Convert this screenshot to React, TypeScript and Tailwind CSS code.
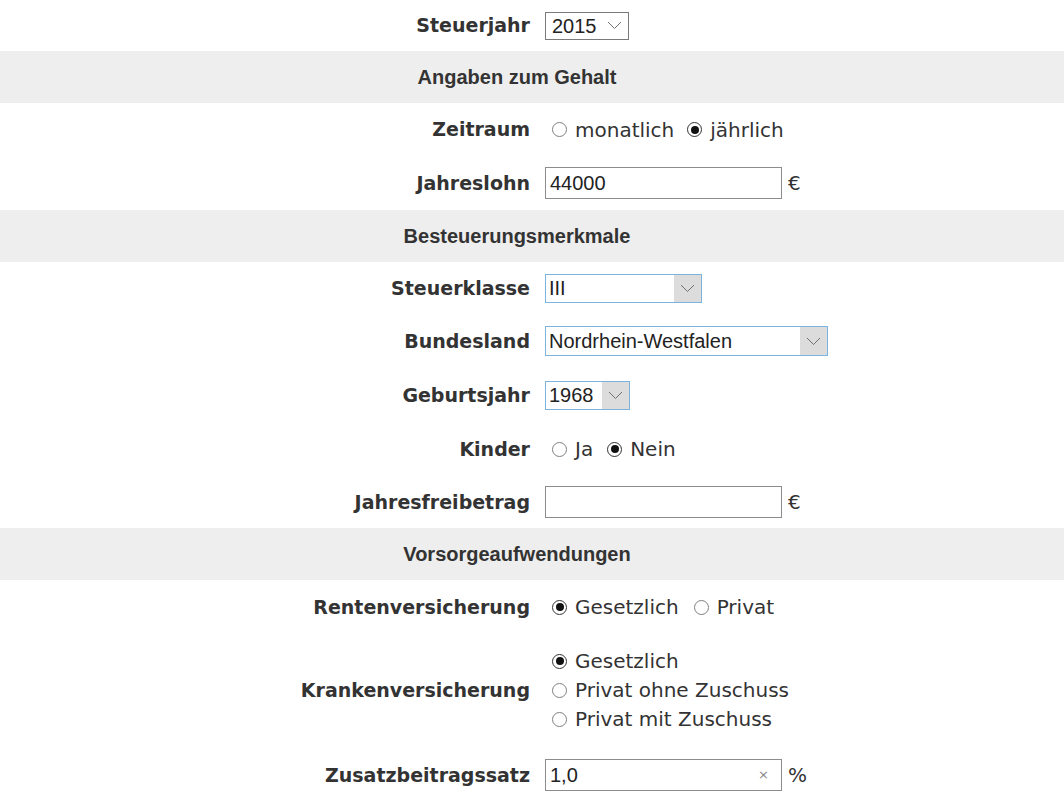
import React from 'react';

const labelCls = "text-right font-['DejaVu_Sans',sans-serif] text-[19px] font-bold text-[#333]";
const optCls = "font-['DejaVu_Sans',sans-serif] text-[20px] text-[#333]";
const fieldText = "font-['Liberation_Sans',Arial,sans-serif] text-[20px] text-[#222]";

function Chevron() {
  return (
    <svg width="15" height="9" viewBox="0 0 15 9" className="block">
      <polyline points="1,1 7.5,7.5 14,1" fill="none" stroke="#707070" strokeWidth="1" />
    </svg>
  );
}

function Radio({ checked, label }: { checked?: boolean; label: string }) {
  return (
    <label className="flex items-center">
      <span
        className={`ml-[7px] mr-[8px] flex h-[15px] w-[15px] items-center justify-center rounded-full border bg-white ${
          checked ? 'border-[#333]' : 'border-[#808080]'
        }`}
      >
        {checked && <span className="h-[8px] w-[8px] rounded-full bg-[#111]" />}
      </span>
      <span className={optCls}>{label}</span>
    </label>
  );
}

function Row({ label, h, children }: { label: string; h: string; children: React.ReactNode }) {
  return (
    <div className={`grid grid-cols-[530px_1fr] items-center gap-x-[15px] ${h}`}>
      <div className={labelCls}>{label}</div>
      <div className="flex items-center">{children}</div>
    </div>
  );
}

function Band({ title }: { title: string }) {
  return (
    <div className="flex h-[52px] items-center justify-center bg-[#eeeeee] pr-[30px] font-['Liberation_Sans',Arial,sans-serif] text-[20px] font-bold text-[#333]">
      {title}
    </div>
  );
}

function PlainSelect({ value }: { value: string }) {
  return (
    <div className="flex h-[28px] w-[84px] items-center justify-between border border-[#7a7a7a] bg-white pl-[6px] pr-[6px]">
      <span className={fieldText}>{value}</span>
      <Chevron />
    </div>
  );
}

function BlueSelect({ value, w, h }: { value: string; w: string; h: string }) {
  return (
    <div className={`flex items-stretch border border-[#7db3df] bg-white ${w} ${h}`}>
      <span className={`flex flex-1 items-center pl-[3px] ${fieldText}`}>{value}</span>
      <span className="flex w-[27px] items-center justify-center bg-[#dcdcdc]">
        <Chevron />
      </span>
    </div>
  );
}

function TextBox({ value, clear }: { value?: string; clear?: boolean }) {
  return (
    <div className="flex h-[32px] w-[237px] items-center border border-[#8c8c8c] bg-white pl-[4px] pr-[12px]">
      <span className={`flex-1 ${fieldText}`}>{value}</span>
      {clear && <span className="font-['DejaVu_Sans',sans-serif] text-[13px] text-[#888]">×</span>}
    </div>
  );
}

function Unit({ children }: { children: React.ReactNode }) {
  return <span className={`ml-[6px] ${optCls}`}>{children}</span>;
}

export default function App() {
  return (
    <div className="min-h-screen w-[1064px] bg-white">
      <Row label="Steuerjahr" h="h-[51px]">
        <PlainSelect value="2015" />
      </Row>

      <Band title="Angaben zum Gehalt" />

      <Row label="Zeitraum" h="h-[53px]">
        <div className="flex items-center gap-[6px]">
          <Radio label="monatlich" />
          <Radio checked label="jährlich" />
        </div>
      </Row>
      <Row label="Jahreslohn" h="h-[54px]">
        <TextBox value="44000" />
        <Unit>€</Unit>
      </Row>

      <Band title="Besteuerungsmerkmale" />

      <Row label="Steuerklasse" h="h-[52px]">
        <BlueSelect value="III" w="w-[157px]" h="h-[29px]" />
      </Row>
      <Row label="Bundesland" h="h-[54px]">
        <BlueSelect value="Nordrhein-Westfalen" w="w-[283px]" h="h-[30px]" />
      </Row>
      <Row label="Geburtsjahr" h="h-[54px]">
        <BlueSelect value="1968" w="w-[85px]" h="h-[29px]" />
      </Row>
      <Row label="Kinder" h="h-[54px]">
        <div className="flex items-center gap-[7px]">
          <Radio label="Ja" />
          <Radio checked label="Nein" />
        </div>
      </Row>
      <Row label="Jahresfreibetrag" h="h-[52px]">
        <TextBox />
        <Unit>€</Unit>
      </Row>

      <Band title="Vorsorgeaufwendungen" />

      <Row label="Rentenversicherung" h="h-[54px]">
        <div className="flex items-center gap-[8px]">
          <Radio checked label="Gesetzlich" />
          <Radio label="Privat" />
        </div>
      </Row>
      <Row label="Krankenversicherung" h="h-[112px]">
        <div className="flex flex-col leading-[29px]">
          <Radio checked label="Gesetzlich" />
          <Radio label="Privat ohne Zuschuss" />
          <Radio label="Privat mit Zuschuss" />
        </div>
      </Row>
      <Row label="Zusatzbeitragssatz" h="h-[58px]">
        <TextBox value="1,0" clear />
        <Unit>%</Unit>
      </Row>
    </div>
  );
}
